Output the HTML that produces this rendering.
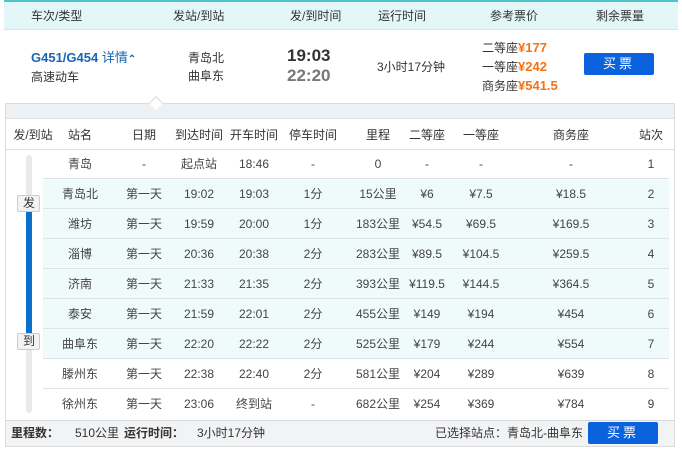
<!DOCTYPE html>
<html><head><meta charset="utf-8"><style>
*{margin:0;padding:0;box-sizing:border-box}
body{width:682px;height:460px;background:#fff;font-family:"Liberation Sans","Noto Sans CJK SC",sans-serif;font-size:12px;color:#333;position:relative;overflow:hidden}
.a{position:absolute;white-space:nowrap;line-height:14px;height:14px}
.c{transform:translateX(-50%)}
.hd{position:absolute;left:4px;top:0;width:674px;height:30px;background:#e3f7f9;border-top:2px solid #4fc3c9;border-bottom:1px solid #cfe9ee}
.btn{position:absolute;background:#0a62dc;color:#fff;border-radius:2px;text-align:center;font-size:13px;letter-spacing:3px}
.panel{position:absolute;left:5px;top:103px;width:670px;height:344px;border:1px solid #dcdcdc;background:#fff}
.row{position:absolute;left:43px;width:626px;height:30px;border-bottom:1px solid #dde3e6}
</style></head><body>
<div class="hd"></div>
<div class="a" style="left:31px;top:9px">车次/类型</div>
<div class="a" style="left:173px;top:9px">发站/到站</div>
<div class="a" style="left:290px;top:9px">发/到时间</div>
<div class="a" style="left:378px;top:9px">运行时间</div>
<div class="a" style="left:490px;top:9px">参考票价</div>
<div class="a" style="left:596px;top:9px">剩余票量</div>

<div class="a" style="left:31px;top:51px;color:#1a66b3;font-weight:bold;font-size:13px">G451/G454 <span style="font-weight:normal">详情</span><span style="font-size:10px">⌃</span></div>
<div class="a" style="left:31px;top:70px">高速动车</div>
<div class="a" style="left:188px;top:51px">青岛北</div>
<div class="a" style="left:188px;top:69px">曲阜东</div>
<div class="a" style="left:287px;top:46px;font-size:17px;font-weight:bold;color:#333;height:20px;line-height:20px">19:03</div>
<div class="a" style="left:287px;top:66px;font-size:17px;font-weight:bold;color:#777;height:20px;line-height:20px">22:20</div>
<div class="a" style="left:377px;top:60px">3小时17分钟</div>
<div class="a" style="left:482px;top:41px">二等座<b style="color:#f47216;font-size:13px">¥177</b></div>
<div class="a" style="left:482px;top:60px">一等座<b style="color:#f47216;font-size:13px">¥242</b></div>
<div class="a" style="left:482px;top:79px">商务座<b style="color:#f47216;font-size:13px">¥541.5</b></div>
<div class="btn" style="left:584px;top:53px;width:70px;height:22px;line-height:22px">买票</div>

<div class="panel">
 <div style="position:absolute;left:0;top:0;width:668px;height:15px;background:#eef1f3;border-bottom:1px solid #dde2e5"></div>
 <div style="position:absolute;left:0;top:16px;width:668px;height:30px;border-bottom:1px solid #dde2e5"></div>
 <div style="position:absolute;left:0;top:316px;width:668px;height:26px;background:#f1f3f5;border-top:1px solid #d5d9dc"></div>
</div>
<div class="a" style="left:151px;top:98px;width:10px;height:10px;background:#fff;border-left:1px solid #dcdcdc;border-top:1px solid #dcdcdc;transform:rotate(45deg)"></div>
<div id="rows"></div>
<div class="a c" style="left:33px;top:128px">发/到站</div>
<div class="a c" style="left:80px;top:128px">站名</div>
<div class="a c" style="left:144px;top:128px">日期</div>
<div class="a c" style="left:199px;top:128px">到达时间</div>
<div class="a c" style="left:254px;top:128px">开车时间</div>
<div class="a c" style="left:313px;top:128px">停车时间</div>
<div class="a c" style="left:378px;top:128px">里程</div>
<div class="a c" style="left:427px;top:128px">二等座</div>
<div class="a c" style="left:481px;top:128px">一等座</div>
<div class="a c" style="left:571px;top:128px">商务座</div>
<div class="a c" style="left:651px;top:128px">站次</div>

<div style="position:absolute;left:26px;top:155px;width:6px;height:258px;background:#e8eaec;border-radius:3px"></div>
<div style="position:absolute;left:26px;top:212px;width:6px;height:122px;background:#0b6fcc"></div>
<div class="a" style="left:17px;top:195px;width:23px;height:17px;background:#f3f3f3;border:1px solid #ccc;border-radius:2px;line-height:15px;padding-left:5px">发</div>
<div class="a" style="left:17px;top:333px;width:23px;height:17px;background:#f3f3f3;border:1px solid #ccc;border-radius:2px;line-height:15px;padding-left:5px">到</div>

<div class="a" style="left:11px;top:426px;font-weight:bold">里程数：</div>
<div class="a" style="left:75px;top:426px">510公里</div>
<div class="a" style="left:124px;top:426px;font-weight:bold">运行时间：</div>
<div class="a" style="left:197px;top:426px">3小时17分钟</div>
<div class="a" style="left:435px;top:426px">已选择站点：青岛北-曲阜东</div>
<div class="btn" style="left:588px;top:422px;width:70px;height:22px;line-height:22px">买票</div>

<script>
var d=[["青岛","-","起点站","18:46","-","0","-","-","-","1"],
["青岛北","第一天","19:02","19:03","1分","15公里","¥6","¥7.5","¥18.5","2"],
["潍坊","第一天","19:59","20:00","1分","183公里","¥54.5","¥69.5","¥169.5","3"],
["淄博","第一天","20:36","20:38","2分","283公里","¥89.5","¥104.5","¥259.5","4"],
["济南","第一天","21:33","21:35","2分","393公里","¥119.5","¥144.5","¥364.5","5"],
["泰安","第一天","21:59","22:01","2分","455公里","¥149","¥194","¥454","6"],
["曲阜东","第一天","22:20","22:22","2分","525公里","¥179","¥244","¥554","7"],
["滕州东","第一天","22:38","22:40","2分","581公里","¥204","¥289","¥639","8"],
["徐州东","第一天","23:06","终到站","-","682公里","¥254","¥369","¥784","9"]];
var x=[80,144,199,254,313,378,427,481,571,651],h="";
for(var i=0;i<9;i++){var t=149+i*30;
h+='<div class="row" style="top:'+t+'px;'+(i>=1&&i<=6?'background:#effbfb;':'')+(i==8?'border-bottom:none':'')+'"></div>';
for(var j=0;j<10;j++){
h+='<div class="a c" style="left:'+x[j]+'px;top:'+(t+8)+'px;color:#444">'+d[i][j]+'</div>';}}
document.getElementById('rows').innerHTML=h;
</script>
</body></html>
